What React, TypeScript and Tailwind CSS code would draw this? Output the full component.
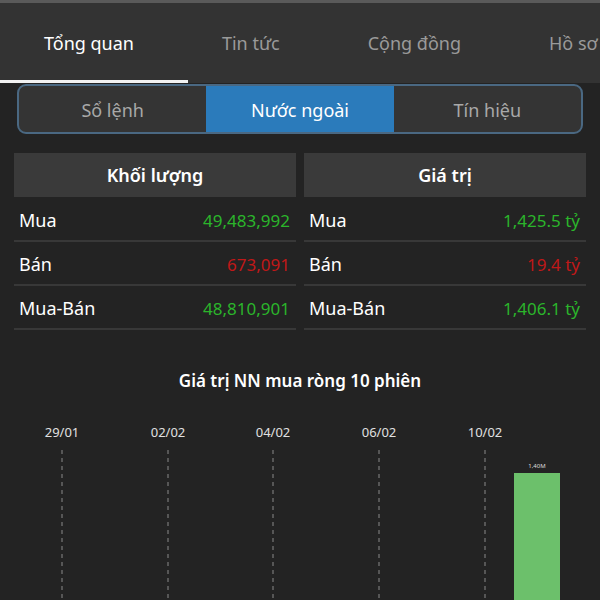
import React from "react";

const font = { fontFamily: '"Noto Sans", "Open Sans", sans-serif' };

function Row({ label, value, color }: { label: string; value: string; color: string }) {
  return (
    <div className="flex h-[44px] items-center justify-between border-b-2 border-[#383838] pl-[5px] pr-[6px] pt-[3px]">
      <span className="text-[18px] text-white">{label}</span>
      <span className={`text-[17px] ${color}`}>{value}</span>
    </div>
  );
}

function Table({ title, rows }: { title: string; rows: { label: string; value: string; color: string }[] }) {
  return (
    <div className="flex-1 flex flex-col">
      <div className="flex h-[44px] items-center justify-center bg-[#3a3a3a] pt-[1px] text-[18px] font-semibold text-white">
        {title}
      </div>
      <div className="h-[1px]" />
      {rows.map((r) => (
        <Row key={r.label} {...r} />
      ))}
    </div>
  );
}

export default function App() {
  const dates = ["29/01", "02/02", "04/02", "06/02", "10/02"];
  const xs = [62, 168, 273, 379, 485];
  return (
    <div className="w-[600px] h-[600px] overflow-hidden bg-[#232323] flex flex-col" style={font}>
      <div className="h-[3px] bg-[#5a5a5a]" />
      <div className="bg-[#333333]">
        <div className="flex h-[77px] items-center whitespace-nowrap overflow-hidden pt-[4px]">
          <div className="px-[44px] text-[18px] text-white">Tổng quan</div>
          <div className="px-[44px] text-[18px] text-[#9a9a9a]">Tin tức</div>
          <div className="px-[44px] text-[18px] text-[#9a9a9a]">Cộng đồng</div>
          <div className="px-[44px] text-[18px] text-[#9a9a9a]">Hồ sơ</div>
        </div>
        <div className="h-[3px] w-[188px] bg-[#f2f2f2]" />
      </div>
      <div className="px-[17px] pt-[1px]">
        <div className="flex h-[50px] overflow-hidden rounded-[9px] border-2 border-[#4a6882] bg-[#343434]">
          <div className="flex flex-1 items-center justify-center pt-[4px] text-[18px] text-[#a8a8a8]">Sổ lệnh</div>
          <div className="flex flex-1 items-center justify-center bg-[#2b7bbb] pt-[4px] text-[18px] text-white">Nước ngoài</div>
          <div className="flex flex-1 items-center justify-center pt-[4px] text-[18px] text-[#a8a8a8]">Tín hiệu</div>
        </div>
      </div>
      <div className="flex gap-[8px] px-[14px] pt-[19px]">
        <Table
          title="Khối lượng"
          rows={[
            { label: "Mua", value: "49,483,992", color: "text-[#2bb52b]" },
            { label: "Bán", value: "673,091", color: "text-[#c01818]" },
            { label: "Mua-Bán", value: "48,810,901", color: "text-[#2bb52b]" },
          ]}
        />
        <Table
          title="Giá trị"
          rows={[
            { label: "Mua", value: "1,425.5 tỷ", color: "text-[#2bb52b]" },
            { label: "Bán", value: "19.4 tỷ", color: "text-[#c01818]" },
            { label: "Mua-Bán", value: "1,406.1 tỷ", color: "text-[#2bb52b]" },
          ]}
        />
      </div>
      <div className="pt-[38px] text-center text-[17px] font-semibold text-white">Giá trị NN mua ròng 10 phiên</div>
      <svg width="600" height="210" className="block mt-[8px]">
        {dates.map((d, i) => (
          <g key={d}>
            <text x={xs[i]} y={36} textAnchor="middle" fill="#e0e0e0" fontSize="13" style={font}>
              {d}
            </text>
            <line x1={xs[i]} y1={49} x2={xs[i]} y2={210} stroke="#8a8a8a" strokeWidth="1" strokeDasharray="4 4" />
          </g>
        ))}
        <text x={537} y={67} textAnchor="middle" fill="#dddddd" fontSize="6" style={font}>
          1,40M
        </text>
        <rect x={514} y={72} width={46} height={140} fill="#6cc06b" />
      </svg>
    </div>
  );
}
